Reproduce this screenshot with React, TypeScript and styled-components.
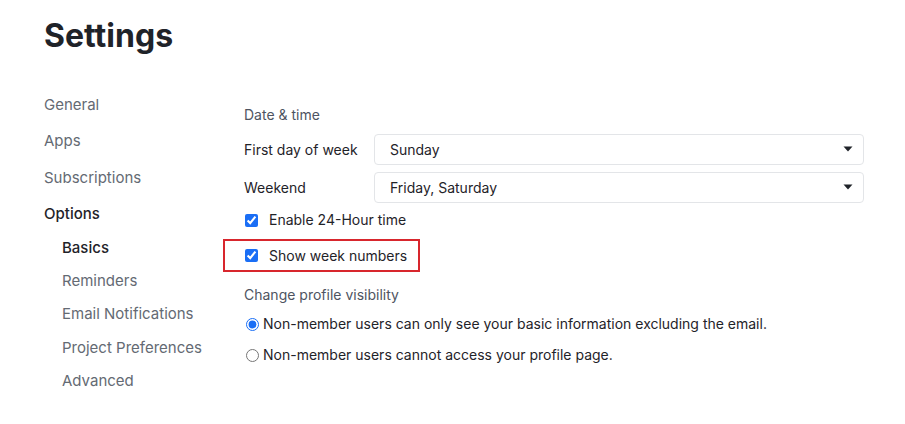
import React from 'react';
import styled, {createGlobalStyle} from 'styled-components';

const GlobalStyle = createGlobalStyle`
    body {
        margin: 0;
        background: #ffffff;
        font-family: Inter, "Noto Sans", sans-serif;
        color: #1f2329;
    }
`;

type NavItem = {label: string; active?: boolean; sub?: boolean; group?: boolean};

const navItems: NavItem[] = [
    {label: 'General'},
    {label: 'Apps'},
    {label: 'Subscriptions'},
    {label: 'Options', active: true, group: true},
    {label: 'Basics', active: true, sub: true},
    {label: 'Reminders', sub: true},
    {label: 'Email Notifications', sub: true},
    {label: 'Project Preferences', sub: true},
    {label: 'Advanced', sub: true},
];

const Caret = () => (
    <svg
        width='10'
        height='6'
        viewBox='0 0 10 6'
    >
        <path
            d='M0.5 0.5h9L5 5.5z'
            fill='#1f2329'
        />
    </svg>
);

export default function App() {
    return (
        <Page>
            <GlobalStyle/>
            <Title>{'Settings'}</Title>
            <Body>
                <Nav>
                    {navItems.map((item) => (
                        <NavLink
                            key={item.label}
                            active={item.active}
                            sub={item.sub}
                            group={item.group}
                        >
                            {item.label}
                        </NavLink>
                    ))}
                </Nav>
                <Main>
                    <SectionTitle>{'Date & time'}</SectionTitle>
                    <FieldRow>
                        <FieldLabel>{'First day of week'}</FieldLabel>
                        <Select>
                            <span>{'Sunday'}</span>
                            <Caret/>
                        </Select>
                    </FieldRow>
                    <FieldRow>
                        <FieldLabel>{'Weekend'}</FieldLabel>
                        <Select>
                            <span>{'Friday, Saturday'}</span>
                            <Caret/>
                        </Select>
                    </FieldRow>
                    <CheckRow>
                        <Check
                            type='checkbox'
                            defaultChecked={true}
                        />
                        {'Enable 24-Hour time'}
                    </CheckRow>
                    <Highlight>
                        <CheckRow>
                            <Check
                                type='checkbox'
                                defaultChecked={true}
                            />
                            {'Show week numbers'}
                        </CheckRow>
                    </Highlight>
                    <SectionTitle spaced={true}>{'Change profile visibility'}</SectionTitle>
                    <RadioRow>
                        <Radio
                            type='radio'
                            name='visibility'
                            defaultChecked={true}
                        />
                        {'Non-member users can only see your basic information excluding the email.'}
                    </RadioRow>
                    <RadioRow>
                        <Radio
                            type='radio'
                            name='visibility'
                        />
                        {'Non-member users cannot access your profile page.'}
                    </RadioRow>
                </Main>
            </Body>
        </Page>
    );
}

const Page = styled.div`
    width: 905px;
    height: 424px;
    padding: 16px 0 0 44px;
    box-sizing: border-box;
`;

const Title = styled.h1`
    margin: 0;
    font-size: 32px;
    line-height: 40px;
    font-weight: 700;
    color: #1f2329;
`;

const Body = styled.div`
    display: flex;
    margin-top: 35px;
`;

const Nav = styled.nav`
    width: 200px;
    padding-top: 4px;
    display: flex;
    flex-direction: column;
`;

const NavLink = styled.div<{active?: boolean; sub?: boolean; group?: boolean}>`
    font-size: 15px;
    line-height: 20px;
    height: ${({sub, group}) => (sub ? '33.3px' : group ? '34px' : '36.3px')};
    padding-left: ${({sub}) => (sub ? '18px' : '0')};
    color: ${({active}) => (active ? '#1f2329' : '#646a73')};
    font-weight: ${({active}) => (active ? 500 : 400)};
`;

const Main = styled.div`
    display: flex;
    flex-direction: column;
    width: 620px;
`;

const SectionTitle = styled.div<{spaced?: boolean}>`
    font-size: 14px;
    line-height: 20px;
    color: #4e5461;
    margin-top: ${({spaced}) => (spaced ? '13px' : '14px')};
    margin-bottom: ${({spaced}) => (spaced ? '3.5px' : '8.5px')};
`;

const FieldRow = styled.div`
    display: flex;
    align-items: center;
    margin-bottom: 7px;
`;

const FieldLabel = styled.div`
    width: 130px;
    font-size: 14px;
    color: #1f2329;
`;

const Select = styled.div`
    flex: 1;
    height: 31px;
    box-sizing: border-box;
    border: 1px solid #e3e5e8;
    border-radius: 4px;
    display: flex;
    align-items: center;
    justify-content: space-between;
    padding: 0 10px 0 15px;
    font-size: 14px;
    color: #1f2329;
`;

const CheckRow = styled.label`
    display: flex;
    align-items: center;
    font-size: 14px;
    line-height: 20px;
    height: 21px;
    color: #1f2329;
`;

const Check = styled.input`
    width: 13px;
    height: 13px;
    margin: 0 11px 0 1px;
    accent-color: #1a6ef5;
`;

const Highlight = styled.div`
    margin: 8.5px 0 0 -21px;
    width: 197px;
    height: 33px;
    box-sizing: border-box;
    border: 2px solid #d8262d;
    padding-left: 19px;
    display: flex;
    align-items: center;
`;

const RadioRow = styled.label`
    display: flex;
    align-items: center;
    font-size: 14px;
    line-height: 20px;
    height: 31px;
    color: #1f2329;
`;

const Radio = styled.input`
    width: 13px;
    height: 13px;
    margin: 0 4px 0 2px;
    accent-color: #1a6ef5;
`;
